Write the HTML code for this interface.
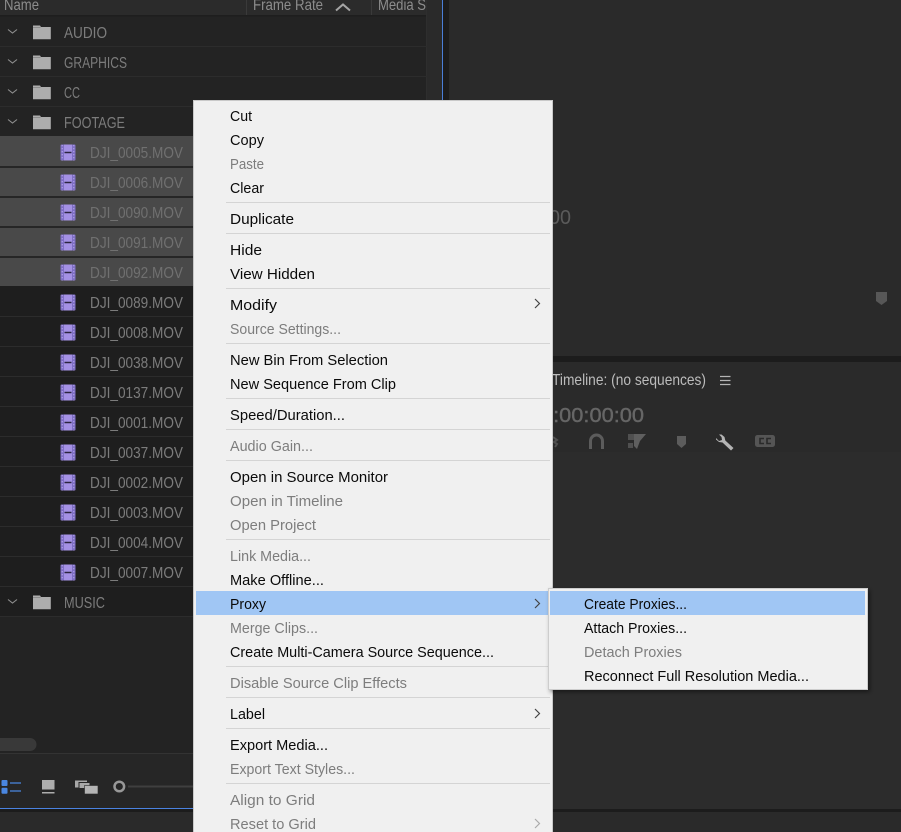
<!DOCTYPE html>
<html><head><meta charset="utf-8"><style>
html,body{margin:0;padding:0;background:#2a2a2a;overflow:hidden}
svg{display:block}
text{font-family:"Liberation Sans",sans-serif;font-size:15px}
.m text{fill:#0a0a0a}
.m text.d{fill:#7d7d7d}
.l text{fill:#7c7c7c;font-size:16px}
.l text.s{fill:#707070}
</style></head><body>
<svg width="901" height="832" viewBox="0 0 901 832" xmlns="http://www.w3.org/2000/svg">
<defs>
<filter id="sh" x="-5%" y="-5%" width="112%" height="112%"><feDropShadow dx="2" dy="2" stdDeviation="2" flood-color="#000" flood-opacity=".45"/></filter>
<g id="fo"><path d="M33 25.500h7l1 1.500h9.800v12.300h-17.800z" fill="#adadad"/><path d="M33 27.500h7.500" stroke="#7e7e7e" stroke-width=".7"/></g>
<g id="chev"><path d="M8 29.500l4.500 3.500 4.500-3.500" fill="none" stroke="#8e8e8e" stroke-width="1.100"/></g>
<g id="fi"><rect x="60.500" y="144.500" width="15" height="16" rx="1" fill="#7f6fc4"/><rect x="64" y="144.500" width="8" height="16" fill="#a491e4"/><path d="M62.200 145v15.500M73.800 145v15.500" stroke="#b9abec" stroke-width="1" stroke-dasharray="1.200 1.800"/><path d="M64.500 152.500h7" stroke="#2a2540" stroke-width="1.500"/></g>
</defs>

<rect width="901" height="832" fill="#2a2a2a"/>
<!-- left project panel -->
<rect x="0" y="0" width="427" height="753" fill="#232323"/>
<rect x="0" y="0" width="427" height="15" fill="#2b2b2b"/>
<rect x="0" y="15" width="427" height="1.500" fill="#1e1e1e"/>
<rect x="246" y="0" width="1" height="15" fill="#3a3a3a"/>
<rect x="371" y="0" width="1" height="15" fill="#3a3a3a"/>
<rect x="427" y="0" width="15" height="808" fill="#2a2a2a"/>
<rect x="426" y="0" width="1" height="753" fill="#2e2e2e"/>
<rect x="442" y="0" width="1" height="100" fill="#4a7fd8"/>
<rect x="443" y="0" width="6" height="356" fill="#1c1c1c"/>
<g class="l">
<text x="4" y="10" textLength="35" lengthAdjust="spacingAndGlyphs" style="fill:#8d8d8d">Name</text>
<text x="253" y="10" textLength="70" lengthAdjust="spacingAndGlyphs" style="fill:#8d8d8d">Frame Rate</text>
<text x="378" y="10" textLength="48" lengthAdjust="spacingAndGlyphs" style="fill:#8d8d8d">Media S</text>
</g>
<path d="M336 10.500l7-6 7 6" fill="none" stroke="#a5a5a5" stroke-width="2"/>
<!-- row backgrounds -->
<rect x="0" y="46" width="427" height="1" fill="#2c2c2c"/>
<rect x="0" y="76" width="427" height="1" fill="#2c2c2c"/>
<rect x="0" y="106" width="427" height="1" fill="#2c2c2c"/>
<rect x="0" y="136" width="427" height="30" fill="#494949"/>
<rect x="0" y="166" width="427" height="2" fill="#262626"/>
<rect x="0" y="168" width="427" height="28" fill="#494949"/>
<rect x="0" y="196" width="427" height="2" fill="#262626"/>
<rect x="0" y="198" width="427" height="28" fill="#494949"/>
<rect x="0" y="226" width="427" height="2" fill="#262626"/>
<rect x="0" y="228" width="427" height="28" fill="#494949"/>
<rect x="0" y="256" width="427" height="2" fill="#262626"/>
<rect x="0" y="258" width="427" height="28" fill="#494949"/>
<rect x="0" y="286" width="427" height="330" fill="#1e1e1e"/>
<g fill="#2c2c2c"><rect y="316" width="427" height="1"/><rect y="346" width="427" height="1"/><rect y="376" width="427" height="1"/><rect y="406" width="427" height="1"/><rect y="436" width="427" height="1"/><rect y="466" width="427" height="1"/><rect y="496" width="427" height="1"/><rect y="526" width="427" height="1"/><rect y="556" width="427" height="1"/><rect y="586" width="427" height="1"/><rect y="616" width="427" height="1"/></g>
<!-- folders -->
<use href="#chev"/><use href="#fo"/>
<use href="#chev" y="30"/><use href="#fo" y="30"/>
<use href="#chev" y="60"/><use href="#fo" y="60"/>
<use href="#chev" y="90"/><use href="#fo" y="90"/>
<use href="#chev" y="570"/><use href="#fo" y="570"/>
<g class="l">
<text x="64" y="38" textLength="43" lengthAdjust="spacingAndGlyphs">AUDIO</text>
<text x="64" y="68" textLength="63" lengthAdjust="spacingAndGlyphs">GRAPHICS</text>
<text x="64" y="98" textLength="16" lengthAdjust="spacingAndGlyphs">CC</text>
<text x="64" y="128" textLength="61" lengthAdjust="spacingAndGlyphs">FOOTAGE</text>
<text x="64" y="608" textLength="41" lengthAdjust="spacingAndGlyphs">MUSIC</text>
<text class="s" x="90" y="158" textLength="93" lengthAdjust="spacingAndGlyphs">DJI_0005.MOV</text>
<text class="s" x="90" y="188" textLength="93" lengthAdjust="spacingAndGlyphs">DJI_0006.MOV</text>
<text class="s" x="90" y="218" textLength="93" lengthAdjust="spacingAndGlyphs">DJI_0090.MOV</text>
<text class="s" x="90" y="248" textLength="93" lengthAdjust="spacingAndGlyphs">DJI_0091.MOV</text>
<text class="s" x="90" y="278" textLength="93" lengthAdjust="spacingAndGlyphs">DJI_0092.MOV</text>
<text x="90" y="308" textLength="93" lengthAdjust="spacingAndGlyphs">DJI_0089.MOV</text>
<text x="90" y="338" textLength="93" lengthAdjust="spacingAndGlyphs">DJI_0008.MOV</text>
<text x="90" y="368" textLength="93" lengthAdjust="spacingAndGlyphs">DJI_0038.MOV</text>
<text x="90" y="398" textLength="93" lengthAdjust="spacingAndGlyphs">DJI_0137.MOV</text>
<text x="90" y="428" textLength="93" lengthAdjust="spacingAndGlyphs">DJI_0001.MOV</text>
<text x="90" y="458" textLength="93" lengthAdjust="spacingAndGlyphs">DJI_0037.MOV</text>
<text x="90" y="488" textLength="93" lengthAdjust="spacingAndGlyphs">DJI_0002.MOV</text>
<text x="90" y="518" textLength="93" lengthAdjust="spacingAndGlyphs">DJI_0003.MOV</text>
<text x="90" y="548" textLength="93" lengthAdjust="spacingAndGlyphs">DJI_0004.MOV</text>
<text x="90" y="578" textLength="93" lengthAdjust="spacingAndGlyphs">DJI_0007.MOV</text>
</g>
<use href="#fi"/><use href="#fi" y="30"/><use href="#fi" y="60"/><use href="#fi" y="90"/><use href="#fi" y="120"/><use href="#fi" y="150"/><use href="#fi" y="180"/><use href="#fi" y="210"/><use href="#fi" y="240"/><use href="#fi" y="270"/><use href="#fi" y="300"/><use href="#fi" y="330"/><use href="#fi" y="360"/><use href="#fi" y="390"/><use href="#fi" y="420"/>
<!-- scrollbar and toolbar -->
<rect x="-10" y="738" width="46.500" height="13" rx="6.500" fill="#393939"/>
<rect x="0" y="753" width="427" height="55" fill="#262626"/>
<rect x="0" y="753" width="427" height="1" fill="#333"/>
<rect x="1.500" y="780" width="6" height="6" rx="1" fill="#4a86e0"/><rect x="1.500" y="787.700" width="6" height="6" rx="1" fill="#4a86e0"/>
<path d="M10 783h11M10 791h11" stroke="#4a86e0" stroke-width="1.300"/>
<rect x="42" y="780" width="12.500" height="9.500" fill="#adadad"/><rect x="42" y="792" width="12.500" height="1.500" fill="#adadad"/>
<rect x="75" y="780.500" width="12" height="7" fill="#a8a8a8"/>
<rect x="79" y="782.500" width="11" height="6" fill="#a8a8a8" stroke="#262626" stroke-width="1"/>
<rect x="84.500" y="785.500" width="13.500" height="8.500" fill="#b4b4b4" stroke="#262626" stroke-width=".6"/>
<circle cx="119.300" cy="786.500" r="4.800" fill="none" stroke="#989898" stroke-width="2.500"/>
<rect x="128" y="785.500" width="70" height="2" fill="#3f3f3f"/>
<rect x="0" y="808" width="443" height="1.200" fill="#4a82e0"/>
<rect x="0" y="809" width="901" height="3.500" fill="#1c1c1c"/>
<rect x="0" y="812" width="901" height="20" fill="#2a2a2a"/>
<!-- right side -->
<rect x="449" y="0" width="452" height="356" fill="#2a2a2a"/>
<rect x="443" y="356" width="458" height="6" fill="#1c1c1c"/>
<rect x="443" y="362" width="458" height="447" fill="#2a2a2a"/>
<rect x="553" y="452" width="348" height="357" fill="#2c2c2c"/>
<text x="549" y="224" textLength="22" lengthAdjust="spacingAndGlyphs" style="font-size:20px" fill="#5b5b5b">00</text>
<path d="M876 292h11v9l-5.500 4-5.500-4z" fill="#575757"/>
<text x="552" y="385" textLength="154" lengthAdjust="spacingAndGlyphs" style="font-size:16px" fill="#bcbcbc">Timeline: (no sequences)</text>
<path d="M720 376.500h10.500M720 380.500h10.500M720 384.500h10.500" stroke="#b4b4b4" stroke-width="1.300"/>
<text x="541" y="422" textLength="103" lengthAdjust="spacingAndGlyphs" style="font-size:20px" stroke="#666" stroke-width=".4" fill="#666">0:00:00:00</text>
<path d="M553 437l4 3-3 2 3 2-2 3" fill="none" stroke="#4f4f4f" stroke-width="2"/>
<path d="M590.500 449v-8a6 6 0 0 1 12 0v8" fill="none" stroke="#5c5c5c" stroke-width="3"/>
<path d="M628 434h6v6h-6zM628 443h5v5h-5z" fill="#505050"/>
<path d="M634 434h12l-6 7-3 8-3-3z" fill="#5f5f5f"/>
<path d="M677 436h9v8l-4.500 4-4.500-4z" fill="#5c5c5c"/>
<path d="M716 438l3 3 3-1-.5-3-2.500-2.500h2.500l3 2.500.8 3.500 8.200 7.500-2.500 2.500-8.500-8-3.500-.5-3-2.500z" fill="#b4b4b4"/>
<rect x="755" y="435" width="20" height="12" rx="2.500" fill="#555"/>
<path d="M764 438.500h-4v5h4M771 438.500h-4v5h4" fill="none" stroke="#2a2a2a" stroke-width="1.600"/>

<!-- context menu -->
<rect x="193.500" y="100.500" width="359" height="740" fill="#f0f0f0" stroke="#c9c9c9"/>
<g fill="#d4d4d4">
<rect x="226" y="202" width="324" height="1"/><rect x="226" y="233" width="324" height="1"/><rect x="226" y="288" width="324" height="1"/><rect x="226" y="343" width="324" height="1"/><rect x="226" y="398" width="324" height="1"/><rect x="226" y="429" width="324" height="1"/><rect x="226" y="460" width="324" height="1"/><rect x="226" y="539" width="324" height="1"/><rect x="226" y="666" width="324" height="1"/><rect x="226" y="697" width="324" height="1"/><rect x="226" y="728" width="324" height="1"/><rect x="226" y="783" width="324" height="1"/>
</g>
<rect x="196" y="591" width="354" height="24" fill="#a0c6f4"/>
<g class="m">
<text x="230" y="121" textLength="22" lengthAdjust="spacingAndGlyphs">Cut</text>
<text x="230" y="145" textLength="34" lengthAdjust="spacingAndGlyphs">Copy</text>
<text class="d" x="230" y="169" textLength="34" lengthAdjust="spacingAndGlyphs">Paste</text>
<text x="230" y="193" textLength="34" lengthAdjust="spacingAndGlyphs">Clear</text>
<text x="230" y="224" textLength="64" lengthAdjust="spacingAndGlyphs">Duplicate</text>
<text x="230" y="255" textLength="32" lengthAdjust="spacingAndGlyphs">Hide</text>
<text x="230" y="279" textLength="85" lengthAdjust="spacingAndGlyphs">View Hidden</text>
<text x="230" y="310" textLength="47" lengthAdjust="spacingAndGlyphs">Modify</text>
<text class="d" x="230" y="334" textLength="111" lengthAdjust="spacingAndGlyphs">Source Settings...</text>
<text x="230" y="365" textLength="158" lengthAdjust="spacingAndGlyphs">New Bin From Selection</text>
<text x="230" y="389" textLength="166" lengthAdjust="spacingAndGlyphs">New Sequence From Clip</text>
<text x="230" y="420" textLength="115" lengthAdjust="spacingAndGlyphs">Speed/Duration...</text>
<text class="d" x="230" y="451" textLength="83" lengthAdjust="spacingAndGlyphs">Audio Gain...</text>
<text x="230" y="482" textLength="158" lengthAdjust="spacingAndGlyphs">Open in Source Monitor</text>
<text class="d" x="230" y="506" textLength="113" lengthAdjust="spacingAndGlyphs">Open in Timeline</text>
<text class="d" x="230" y="530" textLength="86" lengthAdjust="spacingAndGlyphs">Open Project</text>
<text class="d" x="230" y="561" textLength="81" lengthAdjust="spacingAndGlyphs">Link Media...</text>
<text x="230" y="585" textLength="94" lengthAdjust="spacingAndGlyphs">Make Offline...</text>
<text x="230" y="609" textLength="36" lengthAdjust="spacingAndGlyphs">Proxy</text>
<text class="d" x="230" y="633" textLength="88" lengthAdjust="spacingAndGlyphs">Merge Clips...</text>
<text x="230" y="657" textLength="264" lengthAdjust="spacingAndGlyphs">Create Multi-Camera Source Sequence...</text>
<text class="d" x="230" y="688" textLength="177" lengthAdjust="spacingAndGlyphs">Disable Source Clip Effects</text>
<text x="230" y="719" textLength="35" lengthAdjust="spacingAndGlyphs">Label</text>
<text x="230" y="750" textLength="98" lengthAdjust="spacingAndGlyphs">Export Media...</text>
<text class="d" x="230" y="774" textLength="125" lengthAdjust="spacingAndGlyphs">Export Text Styles...</text>
<text class="d" x="230" y="805" textLength="85" lengthAdjust="spacingAndGlyphs">Align to Grid</text>
<text class="d" x="230" y="829" textLength="86" lengthAdjust="spacingAndGlyphs">Reset to Grid</text>
</g>
<g fill="none" stroke-width="1.200">
<path d="M535 299l4.500 4.500-4.500 4.500" stroke="#444"/>
<path d="M535 599l4.500 4.500-4.500 4.500" stroke="#444"/>
<path d="M535 709l4.500 4.500-4.500 4.500" stroke="#444"/>
<path d="M535 819l4.500 4.500-4.500 4.500" stroke="#aaa"/>
</g>
<!-- submenu -->
<rect x="548.500" y="588.500" width="319" height="101" fill="#f0f0f0" stroke="#cdcdcd" filter="url(#sh)"/>
<rect x="550" y="591" width="315" height="24" fill="#a0c6f4"/>
<g class="m">
<text x="584" y="609" textLength="103" lengthAdjust="spacingAndGlyphs">Create Proxies...</text>
<text x="584" y="633" textLength="103" lengthAdjust="spacingAndGlyphs">Attach Proxies...</text>
<text class="d" x="584" y="657" textLength="98" lengthAdjust="spacingAndGlyphs">Detach Proxies</text>
<text x="584" y="681" textLength="225" lengthAdjust="spacingAndGlyphs">Reconnect Full Resolution Media...</text>
</g>
</svg>
</body></html>
